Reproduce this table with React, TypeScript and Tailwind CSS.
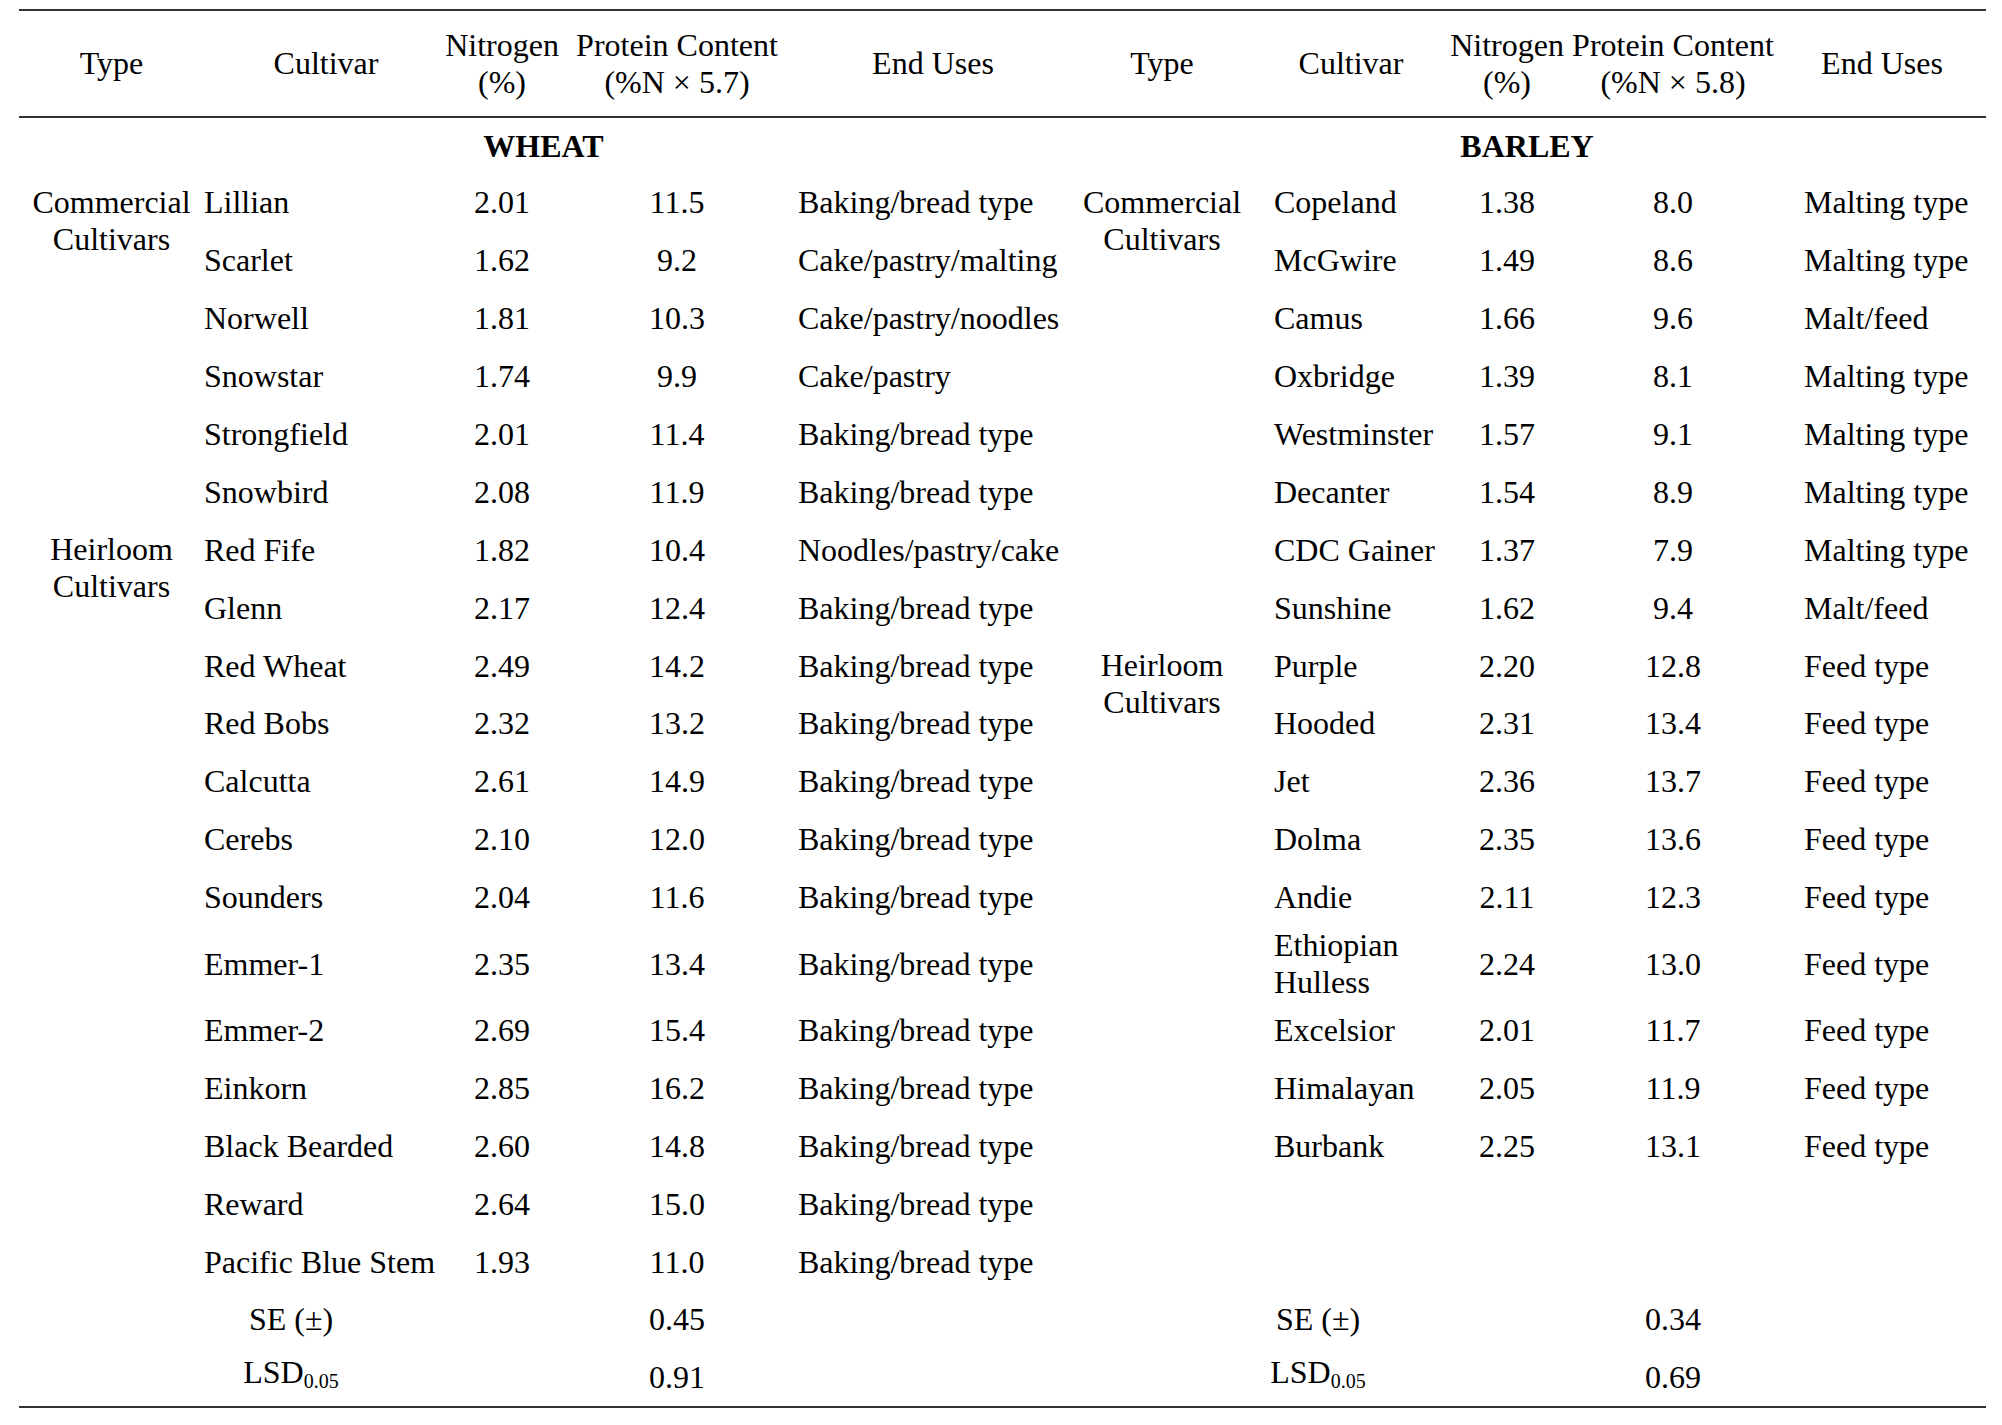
import React from "react";

type Row = { name: React.ReactNode; n: string; p: string; use: string; tall?: boolean };

const wheat: Row[] = [
  { name: "Lillian", n: "2.01", p: "11.5", use: "Baking/bread type" },
  { name: "Scarlet", n: "1.62", p: "9.2", use: "Cake/pastry/malting" },
  { name: "Norwell", n: "1.81", p: "10.3", use: "Cake/pastry/noodles" },
  { name: "Snowstar", n: "1.74", p: "9.9", use: "Cake/pastry" },
  { name: "Strongfield", n: "2.01", p: "11.4", use: "Baking/bread type" },
  { name: "Snowbird", n: "2.08", p: "11.9", use: "Baking/bread type" },
  { name: "Red Fife", n: "1.82", p: "10.4", use: "Noodles/pastry/cake" },
  { name: "Glenn", n: "2.17", p: "12.4", use: "Baking/bread type" },
  { name: "Red Wheat", n: "2.49", p: "14.2", use: "Baking/bread type" },
  { name: "Red Bobs", n: "2.32", p: "13.2", use: "Baking/bread type" },
  { name: "Calcutta", n: "2.61", p: "14.9", use: "Baking/bread type" },
  { name: "Cerebs", n: "2.10", p: "12.0", use: "Baking/bread type" },
  { name: "Sounders", n: "2.04", p: "11.6", use: "Baking/bread type" },
  { name: "Emmer-1", n: "2.35", p: "13.4", use: "Baking/bread type", tall: true },
  { name: "Emmer-2", n: "2.69", p: "15.4", use: "Baking/bread type" },
  { name: "Einkorn", n: "2.85", p: "16.2", use: "Baking/bread type" },
  { name: "Black Bearded", n: "2.60", p: "14.8", use: "Baking/bread type" },
  { name: "Reward", n: "2.64", p: "15.0", use: "Baking/bread type" },
  { name: "Pacific Blue Stem", n: "1.93", p: "11.0", use: "Baking/bread type" },
];

const barley: Row[] = [
  { name: "Copeland", n: "1.38", p: "8.0", use: "Malting type" },
  { name: "McGwire", n: "1.49", p: "8.6", use: "Malting type" },
  { name: "Camus", n: "1.66", p: "9.6", use: "Malt/feed" },
  { name: "Oxbridge", n: "1.39", p: "8.1", use: "Malting type" },
  { name: "Westminster", n: "1.57", p: "9.1", use: "Malting type" },
  { name: "Decanter", n: "1.54", p: "8.9", use: "Malting type" },
  { name: "CDC Gainer", n: "1.37", p: "7.9", use: "Malting type" },
  { name: "Sunshine", n: "1.62", p: "9.4", use: "Malt/feed" },
  { name: "Purple", n: "2.20", p: "12.8", use: "Feed type" },
  { name: "Hooded", n: "2.31", p: "13.4", use: "Feed type" },
  { name: "Jet", n: "2.36", p: "13.7", use: "Feed type" },
  { name: "Dolma", n: "2.35", p: "13.6", use: "Feed type" },
  { name: "Andie", n: "2.11", p: "12.3", use: "Feed type" },
  { name: "Ethiopian Hulless", n: "2.24", p: "13.0", use: "Feed type" },
  { name: "Excelsior", n: "2.01", p: "11.7", use: "Feed type" },
  { name: "Himalayan", n: "2.05", p: "11.9", use: "Feed type" },
  { name: "Burbank", n: "2.25", p: "13.1", use: "Feed type" },
];

// row index where each type group starts, and how many rows it spans
const wheatGroups: Record<number, number> = { 0: 6, 6: 13 };
const barleyGroups: Record<number, number> = { 0: 8, 8: 9 };

const TypeCell = ({ span, first }: { span: number; first: string }) => (
  <td rowSpan={span} className="align-top text-center pt-[10px]">
    {first}
    <br />
    Cultivars
  </td>
);

const Sub = () => <span className="text-[20px] align-[-5px]">0.05</span>;

export default function App() {
  return (
    <div className="min-h-screen bg-white pt-[9px] pl-[19px] text-black font-['Liberation_Serif',serif] text-[32px] leading-[37px]">
      <table className="table-fixed border-collapse w-[1967px] border-t-2 border-b-2 border-[#333]">
        <colgroup>
          <col className="w-[185px]" />
          <col className="w-[244px]" />
          <col className="w-[108px]" />
          <col className="w-[242px]" />
          <col className="w-[270px]" />
          <col className="w-[188px]" />
          <col className="w-[190px]" />
          <col className="w-[122px]" />
          <col className="w-[210px]" />
          <col className="w-[208px]" />
        </colgroup>
        <thead>
          <tr className="h-[107px] border-b-2 border-[#333] text-center align-middle whitespace-nowrap">
            <th className="font-normal">Type</th>
            <th className="font-normal">Cultivar</th>
            <th className="font-normal">
              <div className="-mx-[6px]">Nitrogen</div>
              <div>(%)</div>
            </th>
            <th className="font-normal">
              Protein Content
              <br />
              (%N × 5.7)
            </th>
            <th className="font-normal">End Uses</th>
            <th className="font-normal">Type</th>
            <th className="font-normal">Cultivar</th>
            <th className="font-normal">
              Nitrogen
              <br />
              (%)
            </th>
            <th className="font-normal">
              Protein Content
              <br />
              (%N × 5.8)
            </th>
            <th className="font-normal">End Uses</th>
          </tr>
        </thead>
        <tbody>
          <tr className="h-[57px] font-bold text-center">
            <td colSpan={5}>WHEAT</td>
            <td colSpan={5}>BARLEY</td>
          </tr>
          {wheat.map((w, i) => {
            const b = barley[i];
            return (
              <tr key={i} className={w.tall ? "h-[75px]" : "h-[57.9px]"}>
                {wheatGroups[i] !== undefined && (
                  <TypeCell span={wheatGroups[i]} first={i === 0 ? "Commercial" : "Heirloom"} />
                )}
                <td className="whitespace-nowrap">{w.name}</td>
                <td className="text-center">{w.n}</td>
                <td className="text-center">{w.p}</td>
                <td className="whitespace-nowrap">{w.use}</td>
                {b ? (
                  <>
                    {barleyGroups[i] !== undefined && (
                      <TypeCell span={barleyGroups[i]} first={i === 0 ? "Commercial" : "Heirloom"} />
                    )}
                    <td className="pl-[18px]">
                      {b.name === "Ethiopian Hulless" ? (
                        <>
                          Ethiopian
                          <br />
                          Hulless
                        </>
                      ) : (
                        <span className="whitespace-nowrap">{b.name}</span>
                      )}
                    </td>
                    <td className="text-center">{b.n}</td>
                    <td className="text-center">{b.p}</td>
                    <td className="pl-[26px] whitespace-nowrap">{b.use}</td>
                  </>
                ) : (
                  <>
                    <td />
                    <td />
                    <td />
                    <td />
                    <td />
                  </>
                )}
              </tr>
            );
          })}
          <tr className="h-[57.9px]">
            <td />
            <td className="text-center pr-[70px]">SE (±)</td>
            <td />
            <td className="text-center">0.45</td>
            <td />
            <td />
            <td className="text-center pr-[66px]">SE (±)</td>
            <td />
            <td className="text-center">0.34</td>
            <td />
          </tr>
          <tr className="h-[57.9px]">
            <td />
            <td className="text-center pr-[70px] whitespace-nowrap">
              LSD
              <Sub />
            </td>
            <td />
            <td className="text-center">0.91</td>
            <td />
            <td />
            <td className="text-center pr-[66px] whitespace-nowrap">
              LSD
              <Sub />
            </td>
            <td />
            <td className="text-center">0.69</td>
            <td />
          </tr>
        </tbody>
      </table>
    </div>
  );
}
